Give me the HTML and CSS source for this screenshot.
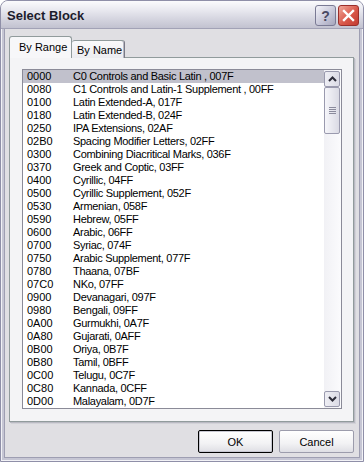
FILE: index.html
```html
<!DOCTYPE html>
<html lang="en">
  <head>
    <meta charset="UTF-8" />
    <title>Select Block</title>
    <link rel="stylesheet" href="styles.css">
  </head>
  <body>
    <div class="window">
      <div class="titlebar">
        <span class="title">Select Block</span>
        <div class="capbtns">
          <span class="capbtn help">?</span>
          <span class="capbtn close">
            <svg width="13" height="13" viewBox="0 0 13 13"><path d="M2 2 L11 11 M11 2 L2 11" stroke="#fff" stroke-width="2.4" stroke-linecap="square"/></svg>
          </span>
        </div>
      </div>
      <div class="client">
        <div class="tabs">
          <div class="tab active">By Range</div>
          <div class="tab">By Name</div>
        </div>
        <div class="panel">
          <div class="listbox">
            <div class="rows">
              <div class="row sel"><span class="code">0000</span>C0 Controls and Basic Latin , 007F</div>
              <div class="row"><span class="code">0080</span>C1 Controls and Latin-1 Supplement , 00FF</div>
              <div class="row"><span class="code">0100</span>Latin Extended-A, 017F</div>
              <div class="row"><span class="code">0180</span>Latin Extended-B, 024F</div>
              <div class="row"><span class="code">0250</span>IPA Extensions, 02AF</div>
              <div class="row"><span class="code">02B0</span>Spacing Modifier Letters, 02FF</div>
              <div class="row"><span class="code">0300</span>Combining Diacritical Marks, 036F</div>
              <div class="row"><span class="code">0370</span>Greek and Coptic, 03FF</div>
              <div class="row"><span class="code">0400</span>Cyrillic, 04FF</div>
              <div class="row"><span class="code">0500</span>Cyrillic Supplement, 052F</div>
              <div class="row"><span class="code">0530</span>Armenian, 058F</div>
              <div class="row"><span class="code">0590</span>Hebrew, 05FF</div>
              <div class="row"><span class="code">0600</span>Arabic, 06FF</div>
              <div class="row"><span class="code">0700</span>Syriac, 074F</div>
              <div class="row"><span class="code">0750</span>Arabic Supplement, 077F</div>
              <div class="row"><span class="code">0780</span>Thaana, 07BF</div>
              <div class="row"><span class="code">07C0</span>NKo, 07FF</div>
              <div class="row"><span class="code">0900</span>Devanagari, 097F</div>
              <div class="row"><span class="code">0980</span>Bengali, 09FF</div>
              <div class="row"><span class="code">0A00</span>Gurmukhi, 0A7F</div>
              <div class="row"><span class="code">0A80</span>Gujarati, 0AFF</div>
              <div class="row"><span class="code">0B00</span>Oriya, 0B7F</div>
              <div class="row"><span class="code">0B80</span>Tamil, 0BFF</div>
              <div class="row"><span class="code">0C00</span>Telugu, 0C7F</div>
              <div class="row"><span class="code">0C80</span>Kannada, 0CFF</div>
              <div class="row"><span class="code">0D00</span>Malayalam, 0D7F</div>
            </div>
            <div class="scrollbar">
              <div class="sbtn">
                <svg width="9" height="6" viewBox="0 0 9 6"><path d="M1 5 L4.5 1.5 L8 5" fill="none" stroke="#2d2d3a" stroke-width="2"/></svg>
              </div>
              <div class="thumb">
                <svg width="7" height="8" viewBox="0 0 7 8"><path d="M0 0.5h7M0 2.5h7M0 4.5h7M0 6.5h7" stroke="#8a8a9c" stroke-width="1"/></svg>
              </div>
              <div class="track"></div>
              <div class="sbtn">
                <svg width="9" height="6" viewBox="0 0 9 6"><path d="M1 1 L4.5 4.5 L8 1" fill="none" stroke="#2d2d3a" stroke-width="2"/></svg>
              </div>
            </div>
          </div>
        </div>
        <div class="buttons">
          <button class="btn default" type="button">OK</button>
          <button class="btn" type="button">Cancel</button>
        </div>
      </div>
    </div>
  </body>
</html>
```

FILE: styles.css
```css
* {
  margin: 0;
  padding: 0;
  box-sizing: border-box;
}
body {
  width: 364px;
  height: 462px;
  font-family: "Liberation Sans", Arial, sans-serif;
  background: #ffffff;
}

.window {
  width: 364px;
  height: 462px;
  background-color: #e0dfe3;
  border: 1px solid #8f8fa8;
  border-radius: 8px 8px 0 0;
  box-shadow: inset 0 0 0 1px #f2f2f6, inset 0 0 0 3px #c6c6d4, inset 0 0 0 4px #9e9eb2;
  display: flex;
  flex-direction: column;
}

.titlebar {
  height: 28px;
  margin: 0 0 1px 0;
  border-radius: 7px 7px 0 0;
  background: linear-gradient(#fbfbfd, #e8e8ef 35%, #d3d3de 70%, #c2c2d0);
  border-bottom: 1px solid #a2a2b6;
  display: flex;
  align-items: center;
  justify-content: space-between;
  padding: 0 4px 0 6px;
}
.title {
  font-weight: 700;
  font-size: 13px;
  color: #1c1c2c;
  padding-top: 2px;
}
.capbtns {
  display: flex;
  gap: 2px;
  padding-top: 2px;
}
.capbtn {
  width: 21px;
  height: 21px;
  border-radius: 3px;
  display: flex;
  align-items: center;
  justify-content: center;
}
.help {
  background: linear-gradient(135deg, #f4f4fa, #c4c4d6 60%, #a6a6bc);
  border: 1px solid #7a7a94;
  color: #4a4a62;
  font-weight: 700;
  font-size: 14px;
}
.close {
  background: linear-gradient(135deg, #f0a89a, #d9584a 55%, #c23a30);
  border: 1px solid #9a2e2a;
}

.client {
  flex: 1;
  padding: 6px 9px 0 8px;
  display: flex;
  flex-direction: column;
}

.tabs {
  display: flex;
  align-items: flex-end;
  height: 22px;
  position: relative;
  z-index: 1;
  margin-bottom: -1px;
}
.tab {
  font-size: 11px;
  color: #000;
  height: 18px;
  white-space: nowrap;
  padding: 2px 6px 0 6px;
  background: linear-gradient(#fafafb, #ececf0);
  border: 1px solid #919b9c;
  border-bottom: none;
  border-radius: 3px 3px 0 0;
}
.tab.active {
  height: 22px;
  width: 63px;
  padding: 4px 0 0 9px;
  background: #f7f7f9;
  border-color: #919b9c;
}
.tab + .tab {
  width: 53px;
  padding: 3px 0 0 5px;
  border-left: none;
  border-right-color: #7a7a86;
  box-shadow: inset -1px 0 0 #b8b8c4;
}

.panel {
  height: 365px;
  border: 1px solid #919b9c;
  box-shadow: 1px 1px 0 #b9b9c2, 2px 2px 0 #d2d2d8;
  background: #f4f4f6;
  padding: 11px 11px 0 12px;
}

.listbox {
  height: 340px;
  border: 1px solid #8b8b98;
  background: #ffffff;
  display: flex;
  overflow: hidden;
}
.rows {
  flex: 1;
  font-size: 11px;
  color: #000;
  overflow: hidden;
  letter-spacing: -0.3px;
}
.row {
  height: 13px;
  line-height: 13px;
  padding-left: 4px;
  white-space: nowrap;
}
.row.sel {
  background: #c1c1cc;
}
.code {
  display: inline-block;
  width: 46px;
  letter-spacing: 0;
}

.scrollbar {
  width: 17px;
  background: linear-gradient(90deg, #f1f1f5, #fbfbfd);
  display: flex;
  flex-direction: column;
  padding: 1px 1px 1px 0;
}
.sbtn {
  height: 16px;
  border: 1px solid #9a9aae;
  border-radius: 2px;
  background: linear-gradient(90deg, #eeeef4, #dcdce6);
  display: flex;
  align-items: center;
  justify-content: center;
}
.thumb {
  height: 47px;
  border: 1px solid #9a9aae;
  border-radius: 2px;
  background: linear-gradient(90deg, #f6f6fa, #dadae4);
  display: flex;
  align-items: center;
  justify-content: center;
}
.track {
  flex: 1;
}

.buttons {
  display: flex;
  justify-content: flex-end;
  gap: 6px;
  padding: 8px 0 0 0;
}
.btn {
  width: 75px;
  height: 23px;
  font-family: "Liberation Sans", Arial, sans-serif;
  font-size: 11px;
  color: #000;
  background: linear-gradient(#ffffff, #f2f2f4 60%, #dedee4);
  border: 1px solid #9c9cac;
  border-radius: 2px;
}
.btn.default {
  border: 1px solid #000;
  box-shadow: inset 0 0 0 1px #c8c8d2;
}
```
